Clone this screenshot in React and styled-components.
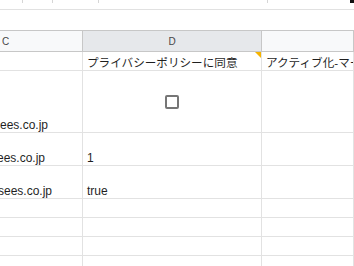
import React from 'react';
import styled, { createGlobalStyle } from 'styled-components';

const Global = createGlobalStyle`
  html, body {
    margin: 0;
    padding: 0;
    background: #fff;
  }
  * {
    box-sizing: border-box;
  }
`;

const Page = styled.div`
  width: 354px;
  height: 266px;
  overflow: hidden;
  font-family: "Liberation Sans", Arial, "Noto Sans CJK JP", sans-serif;
  color: #1f1f1f;
  display: flex;
  flex-direction: column;
`;

const Toolbar = styled.div`
  height: 10px;
  border-bottom: 1px solid #e1e1e1;
  display: flex;
  align-items: flex-start;
  flex-shrink: 0;
`;

const Sep = styled.span`
  width: 1px;
  height: 3px;
  background: #d6d6d6;
  margin-left: ${(p) => p.$gap}px;
`;

const Blob = styled.span`
  width: 4px;
  height: 3px;
  background: #111;
  margin-left: auto;
`;

const Spacer = styled.div`
  height: 20px;
  flex-shrink: 0;
`;

const Row = styled.div`
  display: grid;
  grid-template-columns: 83px 179px 1fr;
  height: ${(p) => p.$h}px;
  flex-shrink: 0;
`;

const HeaderRow = styled(Row)`
  border-top: 1px solid #c7c7c7;
`;

const HeadCell = styled.div`
  background: ${(p) => (p.$selected ? '#e6e8eb' : '#f8f9fa')};
  border-right: 1px solid #c7c7c7;
  border-bottom: 1px solid #c7c7c7;
  display: flex;
  align-items: center;
  justify-content: ${(p) => (p.$edge ? 'flex-start' : 'center')};
  padding-left: ${(p) => (p.$edge ? '2px' : '0')};
  padding-top: 1px;
  font-size: 10px;
  color: #474747;
`;

const Cell = styled.div`
  position: relative;
  border-right: 1px solid #e2e2e2;
  border-bottom: 1px solid #e2e2e2;
  display: flex;
  align-items: flex-end;
  padding: 0 3px 0 4px;
  font-size: 12px;
  line-height: 14px;
  white-space: nowrap;
  overflow: hidden;
`;

const JaCell = styled(Cell)`
  font-size: 11.6px;
`;

const CutCell = styled(Cell)`
  justify-content: flex-end;
  padding-right: ${(p) => p.$trail}px;
`;

const CenterCell = styled(Cell)`
  align-items: center;
  justify-content: center;
  padding: 1px 0 0 0;
`;

const Note = styled.span`
  position: absolute;
  top: 0;
  right: 0;
  width: 0;
  height: 0;
  border-top: 6px solid #f6b400;
  border-left: 6px solid transparent;
`;

const Check = styled.span`
  width: 14px;
  height: 14px;
  border: 2px solid #767676;
  border-radius: 2px;
`;

const rows = [
  { h: 62, c: 'ees.co.jp', trail: 34, d: <Check />, center: true },
  { h: 33, c: 'ees.co.jp', trail: 37, d: '1' },
  { h: 33, c: 'sees.co.jp', trail: 30, d: 'true' },
  { h: 19 },
  { h: 19 },
  { h: 19 },
  { h: 19 },
];

export default function App() {
  return (
    <Page>
      <Global />
      <Toolbar>
        <Sep $gap={22} />
        <Sep $gap={29} />
        <Sep $gap={45} />
        <Sep $gap={168} />
        <Blob />
      </Toolbar>
      <Spacer />
      <HeaderRow $h={22}>
        <HeadCell $edge>C</HeadCell>
        <HeadCell $selected>D</HeadCell>
        <HeadCell />
      </HeaderRow>
      <Row $h={19}>
        <Cell />
        <JaCell>
          プライバシーポリシーに同意
          <Note />
        </JaCell>
        <JaCell>アクティブ化-マーケティング同意</JaCell>
      </Row>
      {rows.map((r, i) => (
        <Row key={i} $h={r.h}>
          <CutCell $trail={r.trail || 3}>{r.c}</CutCell>
          {r.center ? <CenterCell>{r.d}</CenterCell> : <Cell>{r.d}</Cell>}
          <Cell />
        </Row>
      ))}
    </Page>
  );
}
